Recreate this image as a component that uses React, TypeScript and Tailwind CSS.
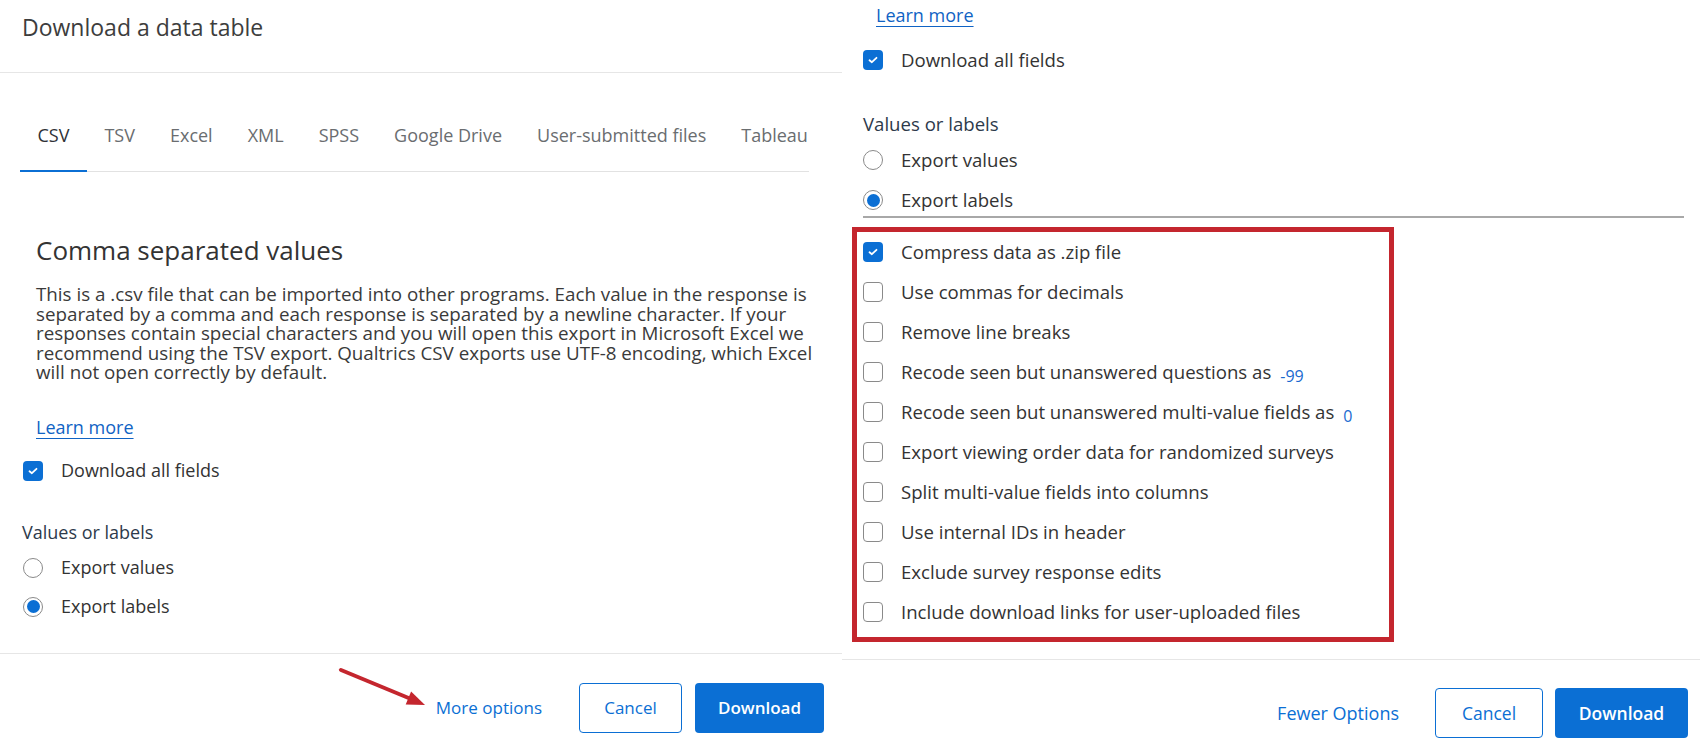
import { ReactNode } from "react";

function Checkbox({ checked }: { checked?: boolean }) {
  if (checked) {
    return (
      <span className="flex h-[20px] w-[20px] shrink-0 items-center justify-center rounded-[4px] bg-[#0b6fd4]">
        <svg width="10" height="8" viewBox="0 0 10 8" fill="none">
          <path d="M1.5 4.3 L3.9 6.2 L8.5 1.8" stroke="white" strokeWidth="1.8" strokeLinecap="round" strokeLinejoin="round" />
        </svg>
      </span>
    );
  }
  return <span className="h-[20px] w-[20px] shrink-0 rounded-[4px] border-[1.5px] border-[#8a8a8a] bg-white" />;
}

function Radio({ checked }: { checked?: boolean }) {
  return (
    <span className="flex h-[20px] w-[20px] shrink-0 items-center justify-center rounded-full border-[1.5px] border-[#8a8a8a] bg-white">
      {checked && <span className="h-[13px] w-[13px] rounded-full bg-[#0b6fd4]" />}
    </span>
  );
}

function Row({ children, control }: { children: ReactNode; control: ReactNode }) {
  return (
    <div className="flex h-[28px] items-center gap-[18px]">
      {control}
      <span className="whitespace-nowrap">{children}</span>
    </div>
  );
}

const tabs = ["CSV", "TSV", "Excel", "XML", "SPSS", "Google Drive", "User-submitted files", "Tableau"];

const extraOptions: { label: string; value?: string; checked?: boolean }[] = [
  { label: "Compress data as .zip file", checked: true },
  { label: "Use commas for decimals" },
  { label: "Remove line breaks" },
  { label: "Recode seen but unanswered questions as", value: "-99" },
  { label: "Recode seen but unanswered multi-value fields as", value: "0" },
  { label: "Export viewing order data for randomized surveys" },
  { label: "Split multi-value fields into columns" },
  { label: "Use internal IDs in header" },
  { label: "Exclude survey response edits" },
  { label: "Include download links for user-uploaded files" },
];

// paragraph is broken by hand so the lines wrap where the dialog wraps them
const csvText = [
  "This is a .csv file that can be imported into other programs. Each value in the response is",
  "separated by a comma and each response is separated by a newline character. If your",
  "responses contain special characters and you will open this export in Microsoft Excel we",
  "recommend using the TSV export. Qualtrics CSV exports use UTF-8 encoding, which Excel",
  "will not open correctly by default.",
];

function LeftPanel() {
  return (
    <div className="relative flex h-[744px] w-[842px] shrink-0 flex-col text-[18px] text-[#333]">
      <div className="h-[73px] border-b border-[#e6e6e6] pl-[22px] pt-[13px]">
        <h1 className="text-[23px] leading-[28px] text-[#3d3d3d]">Download a data table</h1>
      </div>

      <div className="ml-[20px] mt-[50px] flex w-[789px] border-b border-[#e2e2e2]">
        {tabs.map((t, i) => (
          <div
            key={t}
            className={
              i === 0
                ? "-mb-px whitespace-nowrap border-b-2 border-[#0b6fd4] px-[17.5px] pb-[23px] text-[18px] leading-[24px] text-[#2f3236]"
                : "-mb-px whitespace-nowrap border-b-2 border-transparent px-[17.5px] pb-[23px] text-[18px] leading-[24px] text-[#6a6d70]"
            }
          >
            {t}
          </div>
        ))}
      </div>

      <div className="flex-1 px-[36px]">
        <h2 className="mt-[62px] text-[26px] leading-[32px] text-[#333]">Comma separated values</h2>
        <div className="mt-[19px] text-[18.8px] text-[#3a3a3a]">
          {csvText.map((line) => (
            <div key={line} className="h-[19.5px] whitespace-nowrap leading-[19.5px]">
              {line}
            </div>
          ))}
        </div>
        <a className="mt-[32px] block w-fit leading-[24px] text-[#1063c4] underline underline-offset-[4px]">Learn more</a>
        <div className="-ml-[13px] mt-[18px]">
          <Row control={<Checkbox checked />}>Download all fields</Row>
          <div className="-ml-px mt-[35px] leading-[24px] text-[#2d3a4b]">Values or labels</div>
          <div className="mt-[10px]">
            <Row control={<Radio />}>Export values</Row>
          </div>
          <div className="mt-[11px]">
            <Row control={<Radio checked />}>Export labels</Row>
          </div>
        </div>
      </div>

      <div className="flex h-[91px] items-start justify-end gap-[13px] border-t border-[#e6e6e6] pr-[18px] pt-[29px]">
        <button className="mr-[24px] h-[50px] text-[17px] text-[#0b6fd4]">More options</button>
        <button className="h-[50px] w-[103px] rounded-[4px] border border-[#0b6fd4] bg-white text-[17px] text-[#0b6fd4]">Cancel</button>
        <button className="h-[50px] w-[129px] rounded-[4px] bg-[#0b6fd4] text-[17px] font-semibold text-white">Download</button>
      </div>

      <svg className="absolute left-[335px] top-[662px]" width="100" height="50" viewBox="0 0 100 50">
        <line x1="6" y1="8" x2="76" y2="37" stroke="#c4262e" strokeWidth="4" strokeLinecap="round" />
        <polygon points="90,43 70.7,42.6 76.1,29.6" fill="#c4262e" />
      </svg>
    </div>
  );
}

function RightPanel() {
  return (
    <div className="flex h-[744px] flex-1 flex-col text-[18.6px] text-[#333]">
      <div className="flex-1 pt-[3px]">
        <a className="ml-[34px] block w-fit text-[18px] leading-[24px] text-[#1063c4] underline underline-offset-[4px]">Learn more</a>
        <div className="pl-[21px]">
          <div className="mt-[19px]">
            <Row control={<Checkbox checked />}>Download all fields</Row>
          </div>
          <div className="mt-[38px] leading-[24px] text-[#2d3a4b]">Values or labels</div>
          <div className="mt-[10px]">
            <Row control={<Radio />}>Export values</Row>
          </div>
          <div className="mt-[12px]">
            <Row control={<Radio checked />}>Export labels</Row>
          </div>
        </div>
        <div className="ml-[21px] mr-[16px] mt-[2px] h-[2px] bg-[#a8a8a8]" />
        <div className="ml-[10px] mt-[9px] w-[542px] border-[5px] border-[#c4262e] pb-[5px] pl-[6px]">
          {extraOptions.map((o) => (
            <div key={o.label} className="flex h-[40px] items-center gap-[18px]">
              <Checkbox checked={o.checked} />
              <span className="whitespace-nowrap">
                {o.label}
                {o.value && <span className="ml-[9px] inline-block translate-y-[3px] text-[16px] text-[#1a6ad0]">{o.value}</span>}
              </span>
            </div>
          ))}
        </div>
      </div>

      <div className="flex h-[85px] items-start justify-end gap-[12px] border-t border-[#e6e6e6] pr-[12px] pt-[28px]">
        <button className="mr-[24px] h-[50px] text-[18px] text-[#0b6fd4]">Fewer Options</button>
        <button className="h-[50px] w-[108px] rounded-[4px] border border-[#0b6fd4] bg-white text-[17.5px] text-[#0b6fd4]">Cancel</button>
        <button className="h-[50px] w-[133px] rounded-[4px] bg-[#0b6fd4] text-[17.5px] font-semibold text-white">Download</button>
      </div>
    </div>
  );
}

export default function App() {
  return (
    <div className="flex h-[744px] w-[1700px] overflow-hidden bg-white font-['Open_Sans',sans-serif]">
      <LeftPanel />
      <RightPanel />
    </div>
  );
}
